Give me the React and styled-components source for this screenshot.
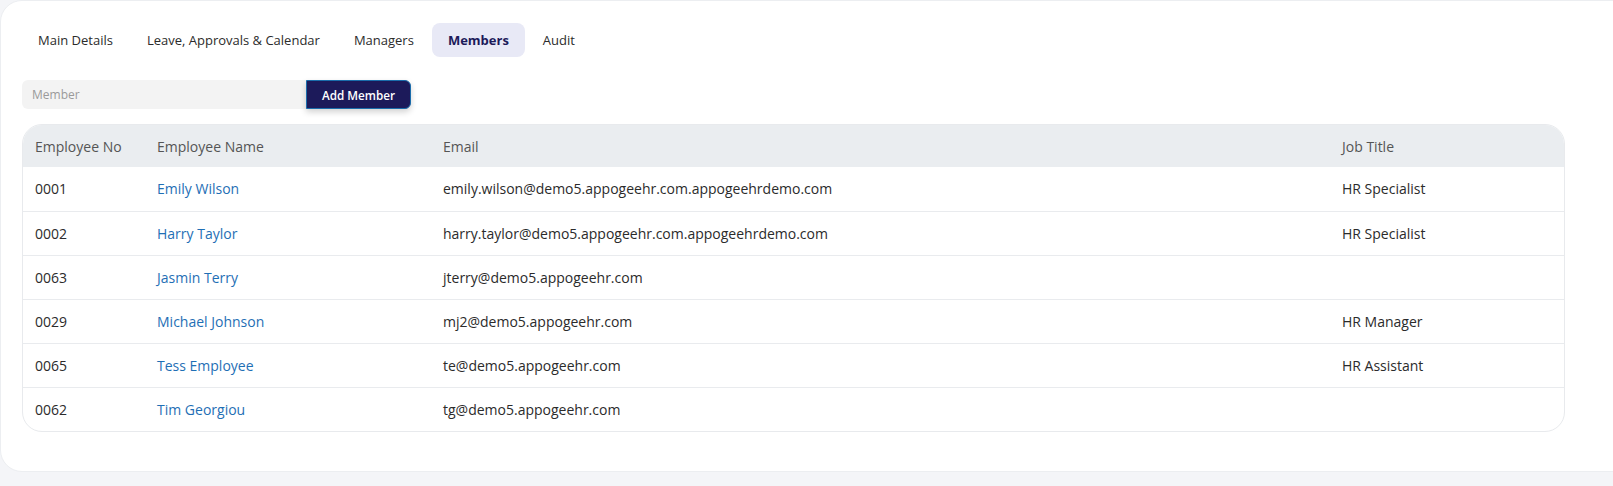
import React from "react";
import styled, { createGlobalStyle } from "styled-components";

const Global = createGlobalStyle`
  html, body { margin: 0; padding: 0; background: #f4f5f8; overflow: hidden; }
  body { font-family: "Open Sans", "Noto Sans", sans-serif; color: #333; }
  * { box-sizing: border-box; }
`;

const Page = styled.div`
  width: 1613px;
  height: 486px;
  overflow: hidden;
`;

const Card = styled.div`
  width: 1720px;
  height: 472px;
  background: #fff;
  border: 1px solid #eceef1;
  border-radius: 22px;
  padding: 22px 0 0 21px;
  display: flex;
  flex-direction: column;
`;

const Tabs = styled.div`
  display: flex;
  gap: 2px;
`;

const Tab = styled.button`
  font-family: inherit;
  font-size: 13px;
  font-weight: ${(p) => (p.$active ? 700 : 400)};
  color: ${(p) => (p.$active ? "#1c1a5a" : "#2b2b2b")};
  background: ${(p) => (p.$active ? "#e8e9f6" : "transparent")};
  border: none;
  border-radius: 8px;
  height: 34px;
  padding: 0 16px;
  cursor: pointer;
`;

const AddRow = styled.div`
  display: flex;
  margin-top: 23px;
  height: 29px;
`;

const MemberInput = styled.input`
  width: 284px;
  height: 29px;
  border: none;
  background: #f3f3f3;
  border-radius: 6px 0 0 6px;
  padding: 0 10px;
  font-family: inherit;
  font-size: 12px;
  color: #333;
  outline: none;
  &::placeholder { color: #9a9a9a; }
`;

const AddButton = styled.button`
  height: 29px;
  width: 105px;
  background: #1c1a5a;
  color: #fff;
  border: 1px solid #1a6cab;
  border-radius: 0 6px 6px 0;
  font-family: inherit;
  font-size: 11.7px;
  font-weight: 600;
  box-shadow: 0 3px 6px rgba(0, 0, 0, 0.18);
  cursor: pointer;
`;

const TableWrap = styled.div`
  margin-top: 15px;
  width: 1543px;
  border: 1px solid #e8eaed;
  border-radius: 20px;
  overflow: hidden;
`;

const Table = styled.table`
  width: 100%;
  border-collapse: collapse;
  table-layout: fixed;
  font-size: 14px;
`;

const Th = styled.th`
  background: #eaedf0;
  height: 42px;
  text-align: left;
  font-weight: 400;
  color: #555;
  padding: 0 12px;
  width: ${(p) => p.$w}px;
`;

const Tr = styled.tr`
  & + & td { border-top: 1px solid #e9ebee; }
`;

const Td = styled.td`
  height: 44px;
  padding: 0 12px;
  color: #2b2b2b;
  white-space: nowrap;
`;

const NameLink = styled.a`
  color: #1f6fb5;
  text-decoration: none;
  cursor: pointer;
`;

const rows = [
  ["0001", "Emily Wilson", "emily.wilson@demo5.appogeehr.com.appogeehrdemo.com", "HR Specialist"],
  ["0002", "Harry Taylor", "harry.taylor@demo5.appogeehr.com.appogeehrdemo.com", "HR Specialist"],
  ["0063", "Jasmin Terry", "jterry@demo5.appogeehr.com", ""],
  ["0029", "Michael Johnson", "mj2@demo5.appogeehr.com", "HR Manager"],
  ["0065", "Tess Employee", "te@demo5.appogeehr.com", "HR Assistant"],
  ["0062", "Tim Georgiou", "tg@demo5.appogeehr.com", ""],
];

const tabs = ["Main Details", "Leave, Approvals & Calendar", "Managers", "Members", "Audit"];

export default function App() {
  return (
    <Page>
      <Global />
      <Card>
        <Tabs>
          {tabs.map((t) => (
            <Tab key={t} $active={t === "Members"}>{t}</Tab>
          ))}
        </Tabs>
        <AddRow>
          <MemberInput placeholder="Member" />
          <AddButton>Add Member</AddButton>
        </AddRow>
        <TableWrap>
          <Table>
            <thead>
              <tr>
                <Th $w={122}>Employee No</Th>
                <Th $w={286}>Employee Name</Th>
                <Th $w={899}>Email</Th>
                <Th>Job Title</Th>
              </tr>
            </thead>
            <tbody>
              {rows.map((r) => (
                <Tr key={r[0]}>
                  <Td>{r[0]}</Td>
                  <Td><NameLink>{r[1]}</NameLink></Td>
                  <Td>{r[2]}</Td>
                  <Td>{r[3]}</Td>
                </Tr>
              ))}
            </tbody>
          </Table>
        </TableWrap>
      </Card>
    </Page>
  );
}
